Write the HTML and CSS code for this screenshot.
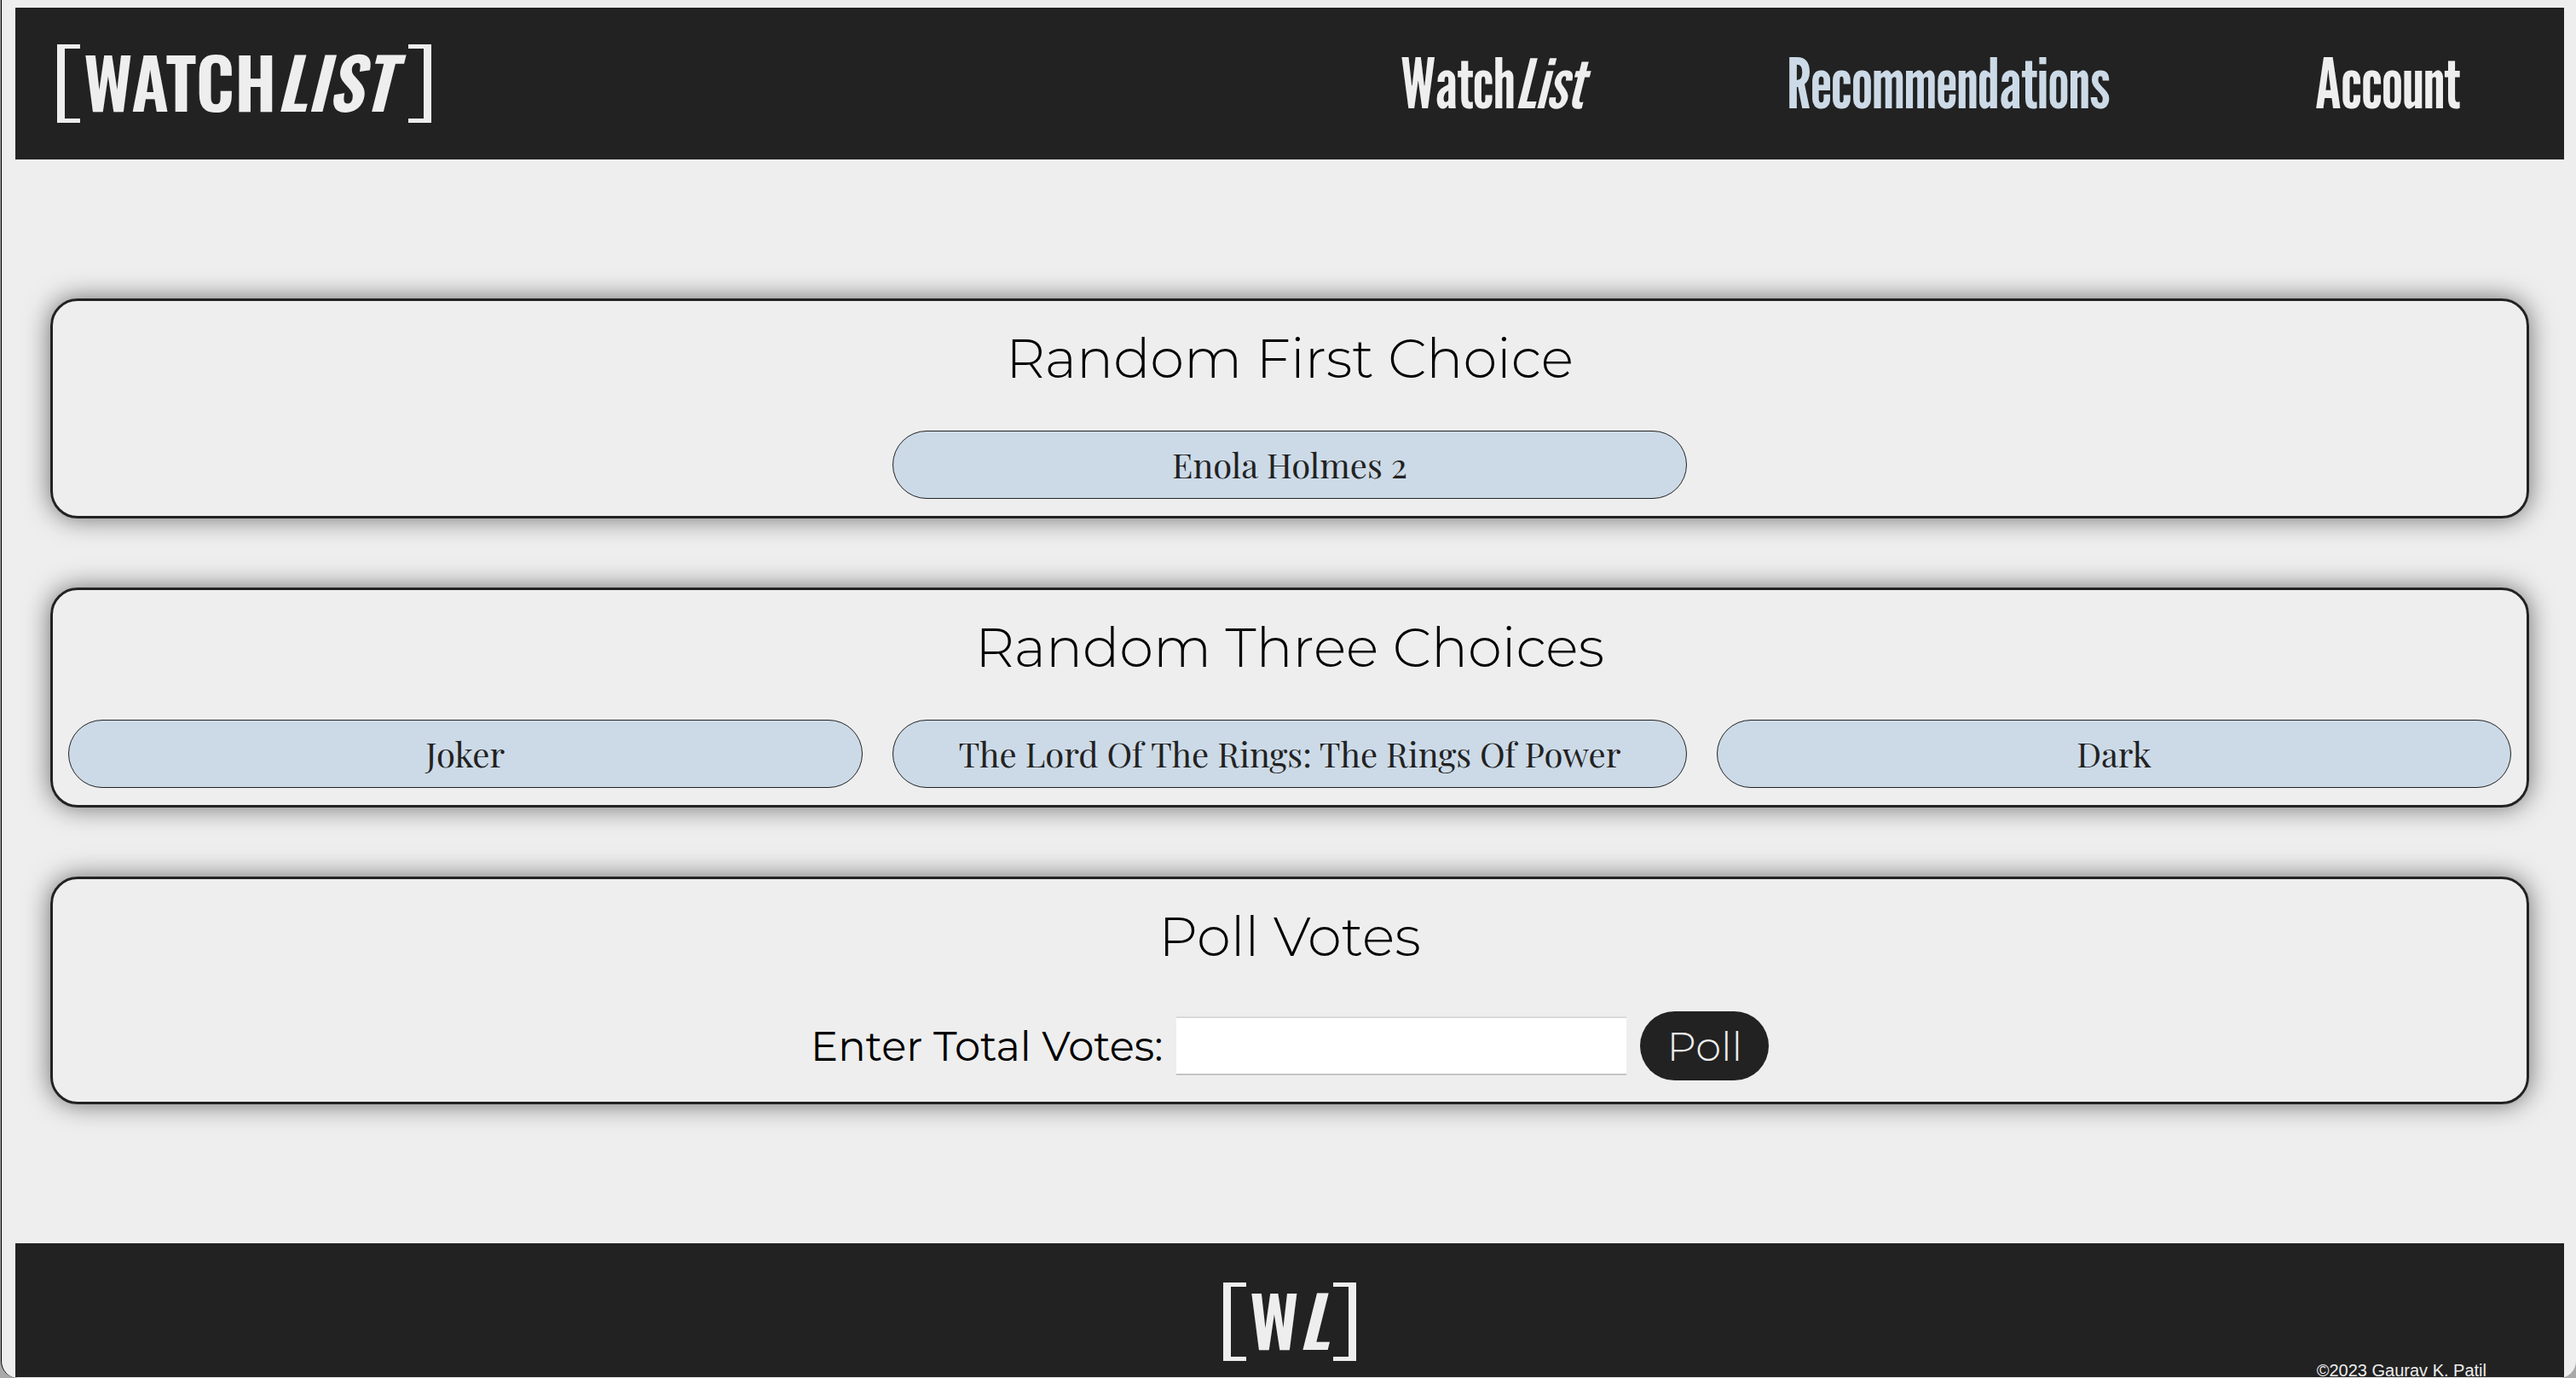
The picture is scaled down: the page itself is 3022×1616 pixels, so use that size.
FILE: index.html
```html
<!DOCTYPE html>
<html lang="en">
<head>
<meta charset="utf-8">
<title>WatchList - Recommendations</title>
<link rel="stylesheet" href="styles.css">
</head>
<body>
<div class="page">
  <header class="header">
    <a class="logo" href="#">
      <span class="bracket bracket-left"></span>
      <span class="logo-text">WATCH<em>LIST</em></span>
      <span class="bracket bracket-right"></span>
    </a>
    <nav class="nav">
      <a href="#">Watch<em>List</em></a>
      <a class="active" href="#">Recommendations</a>
      <a href="#">Account</a>
    </nav>
  </header>

  <main class="main">
    <section class="card">
      <h2>Random First Choice</h2>
      <div class="choices">
        <p class="choice choice-middle">Enola Holmes 2</p>
      </div>
    </section>

    <section class="card">
      <h2>Random Three Choices</h2>
      <div class="choices">
        <p class="choice">Joker</p>
        <p class="choice">The Lord Of The Rings: The Rings Of Power</p>
        <p class="choice">Dark</p>
      </div>
    </section>

    <section class="card">
      <h2>Poll Votes</h2>
      <form class="poll">
        <label for="votes">Enter Total Votes:</label>
        <input id="votes" type="text">
        <button type="button">Poll</button>
      </form>
    </section>
  </main>

  <footer class="footer">
    <div class="logo">
      <span class="bracket bracket-left"></span>
      <span class="logo-text">W<em>L</em></span>
      <span class="bracket bracket-right"></span>
    </div>
    <p class="copyright">©2023 Gaurav K. Patil</p>
  </footer>
</div>
</body>
</html>
```
FILE: styles.css
```css
* {
  box-sizing: border-box;
  margin: 0;
  padding: 0;
}

html {
  background: #a9a9a9;
}

body {
  font-family: Montserrat, "DejaVu Sans", sans-serif;
  font-weight: 300;
}

a {
  color: inherit;
  text-decoration: none;
}

.page {
  min-height: 100vh;
  margin-left: 1px;
  padding: 9px 14px 0 16px;
  border-left: 1px solid #000;
  border-radius: 0 0 20px 20px;
  background: #eee;
}

/* Header */
.header {
  display: flex;
  align-items: center;
  justify-content: space-between;
  height: 178px;
  padding: 0 122px 0 49px;
  background: #222;
  color: #eee;
}

.logo {
  display: flex;
  align-items: flex-start;
  height: 92px;
}

.logo-text {
  padding: 0 18px 0 4px;
  font-family: Oswald, "Open Sans Condensed", sans-serif;
  font-size: 82px;
  font-weight: 600;
  line-height: 84px;
}

.bracket {
  width: 27px;
  height: 92px;
  border: solid #eee;
}

.bracket-left {
  border-width: 5px 0 5px 9px;
}

.bracket-right {
  border-width: 5px 9px 5px 0;
}

.nav {
  display: flex;
  gap: 240px;
  font-family: "League Gothic", "Open Sans Condensed", sans-serif;
  font-size: 80px;
  font-weight: 400;
  line-height: 96px;
}

.nav .active {
  color: #ccdae7;
}

/* Cards */
.main {
  display: flex;
  flex-direction: column;
  gap: 81px;
  padding: 163px 41px;
}

.card {
  padding: 27px 18px 20px;
  border: 3px solid #222;
  border-radius: 32px;
  box-shadow: 0 0 30px rgba(0, 0, 0, 0.55);
  text-align: center;
}

.card h2 {
  margin-bottom: 45px;
  color: #000;
  font-size: 64px;
  font-weight: 300;
  line-height: 80px;
}

.choices {
  display: grid;
  grid-template-columns: repeat(3, 1fr);
  gap: 35px;
}

.choice {
  border: 1px solid #222;
  border-radius: 40px;
  background: #ccdae7;
  color: #222;
  font-family: "Playfair Display", "Liberation Serif", serif;
  font-size: 40px;
  font-weight: 400;
  line-height: 78px;
}

.choice-middle {
  grid-column: 2;
}

.poll {
  display: flex;
  align-items: center;
  justify-content: center;
  gap: 16px;
  padding: 3px 0 5px;
  font-size: 48px;
}

.poll label {
  color: #000;
  font-weight: 400;
}

.poll input {
  width: 528px;
  height: 69px;
  padding: 0 8px;
  border: solid #dadada;
  border-width: 2px 0;
  border-bottom-color: #c4c4c4;
  background: #fff;
  font: inherit;
}

.poll button {
  height: 81px;
  padding: 0 31px;
  border: 0;
  border-radius: 41px;
  background: #222;
  color: #eee;
  font: inherit;
}

/* Footer */
.footer {
  padding-top: 46px;
  background: #222;
  color: #eee;
}

.footer .logo {
  justify-content: center;
}

.footer .logo-text {
  padding-right: 5px;
}

.copyright {
  margin-top: 3px;
  padding-right: 91px;
  font-family: "Liberation Sans", Arial, sans-serif;
  font-size: 20px;
  font-weight: 400;
  line-height: 16px;
  text-align: right;
}
```
